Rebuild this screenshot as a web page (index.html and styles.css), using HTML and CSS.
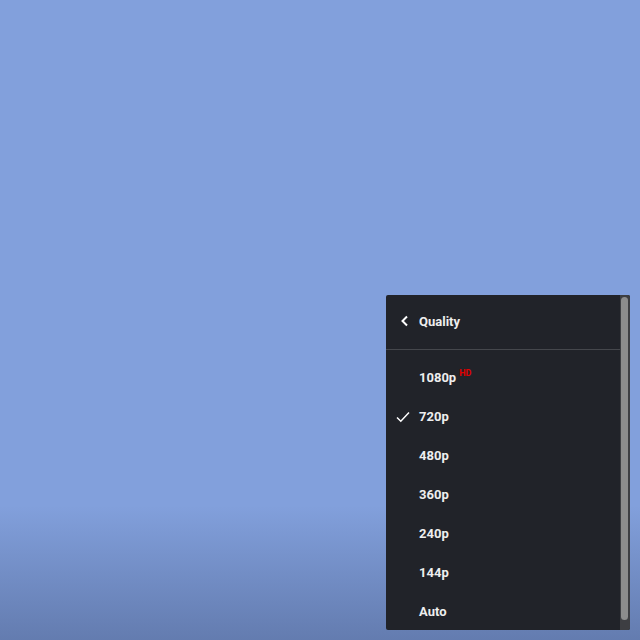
FILE: index.html
```html
<!DOCTYPE html>
<html lang="en">
<head>
  <meta charset="UTF-8">
  <title>Quality</title>
  <link rel="stylesheet" href="styles.css">
</head>
<body>
  <div class="player">
    <div class="shade"></div>

    <div class="menu">
      <div class="menu-body">
        <div class="menu-header">
          <svg class="icon" width="12" height="12" viewBox="0 0 12 12">
            <path d="M8 1.5 L3.5 6 L8 10.5" fill="none" stroke="#fff" stroke-width="2"/>
          </svg>
          <span>Quality</span>
        </div>
        <ul class="menu-list">
          <li class="item"><span class="check"></span><span>1080p<sup class="hd">HD</sup></span></li>
          <li class="item">
            <span class="check">
              <svg width="14" height="12" viewBox="0 0 14 12">
                <path d="M1 6.5 L4.8 10.2 L13 1.5" fill="none" stroke="#fff" stroke-width="1.5"/>
              </svg>
            </span>
            <span>720p</span>
          </li>
          <li class="item"><span class="check"></span><span>480p</span></li>
          <li class="item"><span class="check"></span><span>360p</span></li>
          <li class="item"><span class="check"></span><span>240p</span></li>
          <li class="item"><span class="check"></span><span>144p</span></li>
          <li class="item"><span class="check"></span><span>Auto</span></li>
        </ul>
      </div>
      <div class="scrollbar"><div class="thumb"></div></div>
    </div>
  </div>
</body>
</html>
```

FILE: styles.css
```css
body {
  margin: 0;
  font-family: Roboto, 'Liberation Sans', sans-serif;
  background: #82a0dc;
  overflow: hidden;
}

.player {
  position: relative;
  width: 640px;
  height: 640px;
  background: #82a0dc;
}

.shade {
  position: absolute;
  left: 0;
  right: 0;
  bottom: 0;
  height: 135px;
  background: linear-gradient(to bottom, rgba(0, 0, 0, 0) 0%, rgba(20, 30, 60, 0.28) 100%);
}

.menu {
  position: absolute;
  left: 386px;
  top: 295px;
  width: 244px;
  height: 335px;
  background: #212329;
  border-radius: 2px;
  display: flex;
  overflow: hidden;
}

.menu-body {
  flex: 1;
  color: #eeeeee;
  font-size: 13px;
  font-weight: 700;
}

.menu-header {
  height: 52px;
  display: flex;
  align-items: center;
  padding: 0 0 2px 13px;
  gap: 8px;
  border-bottom: 1px solid #45474c;
}

.menu-list {
  list-style: none;
  margin: 0;
  padding: 8px 0 0;
}

.item {
  height: 39px;
  display: flex;
  align-items: center;
}

.check {
  width: 32px;
  display: flex;
  justify-content: center;
  padding-left: 1px;
}

.hd {
  color: #e00000;
  font-size: 9px;
  margin-left: 3px;
  vertical-align: 6px;
  line-height: 0;
}

.scrollbar {
  width: 10px;
  background: #3d3e42;
  position: relative;
}

.thumb {
  position: absolute;
  left: 1px;
  right: 2px;
  top: 2px;
  bottom: 10px;
  background: #8c8c8c;
  border-radius: 4px;
}
```
